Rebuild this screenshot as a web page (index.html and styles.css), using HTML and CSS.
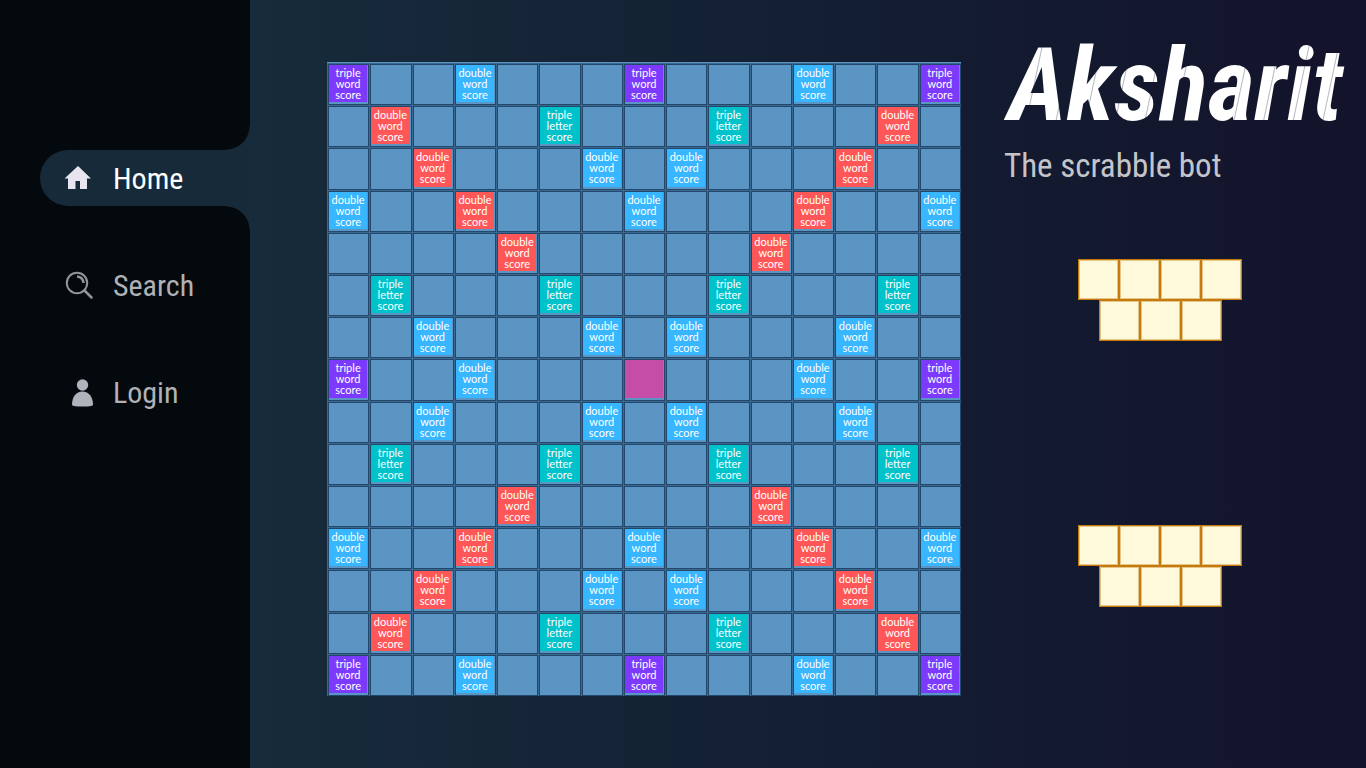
FILE: index.html
```html
<!DOCTYPE html>
<html lang="en">
<head>
<meta charset="utf-8">
<title>Aksharit</title>
<link rel="stylesheet" href="styles.css">
</head>
<body>
<div class="app">
  <nav class="sidebar">
    <a class="nav-link active" href="#home">
      <svg class="icon" viewBox="0 0 32 32"><path d="M14 4 .5 16.500H4V27h7.500v-8h4.500v8H23V16.500h4z" fill="#e8e5f0"/></svg>
      Home
    </a>
    <a class="nav-link" href="#search">
      <svg class="icon" viewBox="0 0 32 32" fill="none" stroke="#929497" stroke-width="2"><circle cx="13" cy="14" r="10.200"/><path d="M20.500 21.500l7 7" stroke-width="2.500" stroke-linecap="round"/><path d="M13 7.500q6 .5 6.500 6.500" stroke-width="2.500"/></svg>
      Search
    </a>
    <a class="nav-link" href="#login">
      <svg class="icon" viewBox="0 0 32 32" fill="#b1b3bc"><circle cx="18.500" cy="9" r="5.700"/><path d="M8 29c0-8 4-13.500 10.500-13.500S29 21 29 29q-1 1.500-10.500 1.500T8 29z"/></svg>
      Login
    </a>
  </nav>
  <main class="main">
    <div class="board" id="board"></div>
    <section class="side">
      <h1 class="logo">Aksharit</h1>
      <p class="tagline">The scrabble bot</p>
      <div class="racks">
        <div class="rack">
          <div class="rack-row"><span class="tile"></span><span class="tile"></span><span class="tile"></span><span class="tile"></span></div>
          <div class="rack-row"><span class="tile"></span><span class="tile"></span><span class="tile"></span></div>
        </div>
        <div class="rack">
          <div class="rack-row"><span class="tile"></span><span class="tile"></span><span class="tile"></span><span class="tile"></span></div>
          <div class="rack-row"><span class="tile"></span><span class="tile"></span><span class="tile"></span></div>
        </div>
      </div>
    </section>
  </main>
</div>
<script src="board.js"></script>
</body>
</html>
```
FILE: styles.css
```css
* { box-sizing: border-box; }
body { margin: 0; font-family: "Roboto Condensed", "Open Sans Condensed", Lato, sans-serif; background: #04090d; }
.app { display: flex; min-height: 100vh; }

.sidebar {
  flex: 0 0 250px;
  display: flex;
  flex-direction: column;
  gap: 51px;
  padding: 150px 0 0 40px;
  background: #04090d;
}
.nav-link {
  position: relative;
  display: flex;
  align-items: center;
  gap: 17px;
  height: 56px;
  padding-left: 24px;
  border-radius: 28px 0 0 28px;
  color: #b0b2b5;
  font-size: 30px;
  text-decoration: none;
}
.nav-link.active { background: #162a3a; color: #fff; }
.nav-link.active::before,
.nav-link.active::after {
  content: "";
  position: absolute;
  right: 0;
  width: 24px;
  height: 24px;
}
.nav-link.active::before { bottom: 100%; background: radial-gradient(circle at 0 0, transparent 23px, #162a3a 24px); }
.nav-link.active::after { top: 100%; background: radial-gradient(circle at 0 100%, transparent 23px, #162a3a 24px); }
.icon { width: 32px; height: 32px; flex: none; }

.main {
  flex: 1;
  display: grid;
  grid-template-columns: minmax(0, 634fr) minmax(0, 362fr);
  gap: 43px;
  align-items: start;
  padding-left: 77px;
  background: linear-gradient(90deg, #162b3b, #131b30 66%, #13132b);
}

.board {
  display: grid;
  grid-template-columns: repeat(15, minmax(0, 1fr));
  grid-template-rows: repeat(15, minmax(0, 1fr));
  aspect-ratio: 1;
  margin: 62px 0;
  border-top: 1px solid #5b95c4;
  background: #3a6890;
}
.cell {
  display: grid;
  margin: 1px 0 0 1px;
  padding: 0 1px 2px 0;
  border: 1px solid #24486b;
  background: #5b95c4;
}
.bonus {
  display: grid;
  place-items: center;
  color: #fff;
  font: 11px/11px Lato, "Open Sans", sans-serif;
  text-align: center;
  white-space: pre-line;
}
.triple-word { background: #7c3aff; }
.double-word { background: #ff5757; }
.double-score { background: #38b6ff; }
.triple-letter { background: #00c2cb; }
.start { background: #c54da8; }

.side { padding-top: 24px; }
.logo {
  margin: 0;
  padding-left: 4px;
  background: repeating-linear-gradient(102deg, #fff 0 12px, #b4b6c2 13px, #fff 14px 29px);
  background-clip: text;
  color: transparent;
  font-size: 102px;
  font-style: italic;
  font-weight: 700;
  line-height: 122px;
}
.tagline { margin: 0; color: #c4c4cb; font-size: 33px; line-height: 40px; }
.racks { display: grid; justify-items: center; gap: 184px; padding: 73px 50px 0 0; }
.rack-row { display: flex; justify-content: center; }
.tile {
  width: 41px;
  height: 41px;
  border: 1px solid #c57a0c;
  background: #fffadb;
  box-shadow: inset 0 0 0 1px #e6c58a;
}
```
FILE: board.js
```
const half = [
  "T..d...T...d..T",
  ".D...L...L...D.",
  "..D...d.d...D..",
  "d..D...d...D..d",
  "....D.....D....",
  ".L...L...L...L.",
  "..d...d.d...d.."
];
const rows = [...half, "T..d...*...d..T", ...half.slice().reverse()];
const bonuses = {
  T: ["triple-word", "triple\nword\nscore"],
  D: ["double-word", "double\nword\nscore"],
  d: ["double-score", "double\nword\nscore"],
  L: ["triple-letter", "triple\nletter\nscore"],
  "*": ["start", ""]
};
const board = document.getElementById("board");
for (const key of rows.join("")) {
  const cell = document.createElement("div");
  cell.className = "cell";
  if (bonuses[key]) {
    const bonus = document.createElement("div");
    bonus.className = "bonus " + bonuses[key][0];
    bonus.textContent = bonuses[key][1];
    cell.append(bonus);
  }
  board.append(cell);
}
```
